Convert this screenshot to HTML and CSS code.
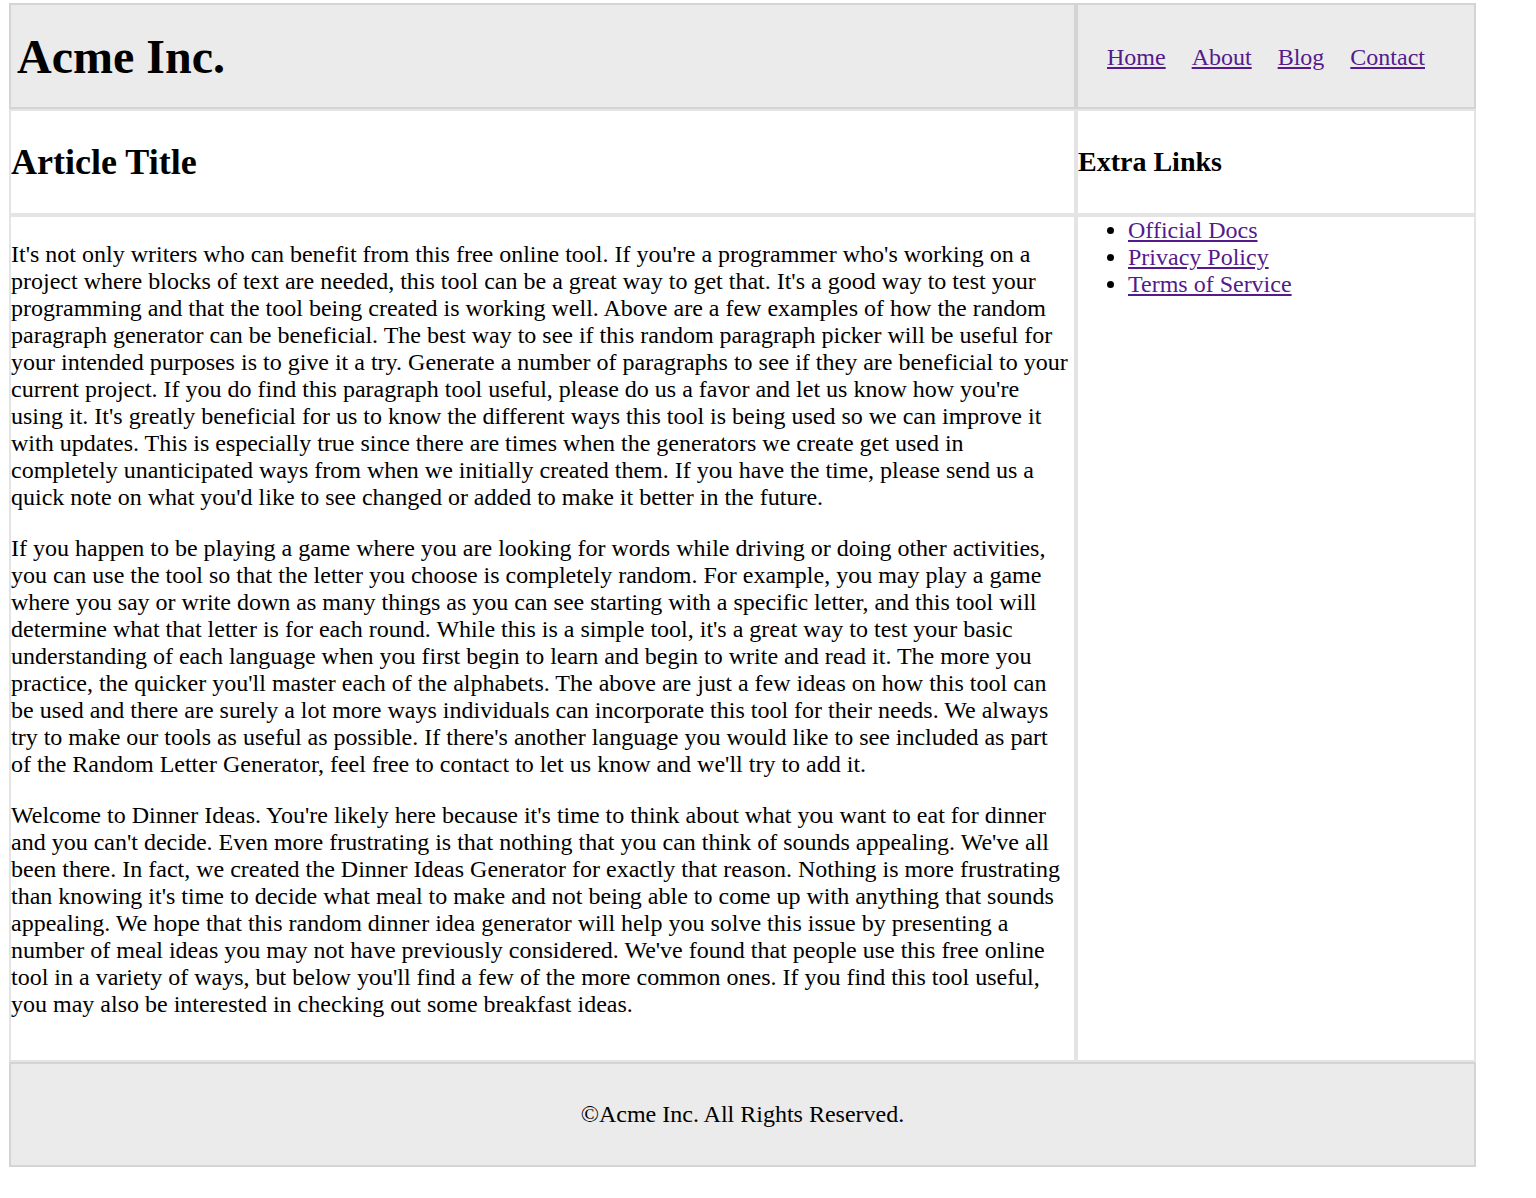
FILE: index.html
```html
<!DOCTYPE html>
<html lang="en">
<head>
<meta charset="utf-8">
<title>Acme Inc.</title>
<link rel="stylesheet" href="styles.css">
</head>
<body>
<div class="page">
  <header class="cell cell-dark brand">
    <h1 class="brand-title">Acme Inc.</h1>
  </header>
  <nav class="cell cell-dark nav">
    <ul class="nav-list">
      <li><a href="#">Home</a></li>
      <li><a href="#">About</a></li>
      <li><a href="#">Blog</a></li>
      <li><a href="#">Contact</a></li>
    </ul>
  </nav>
  <div class="cell cell-light title-cell">
    <h2 class="article-title">Article Title</h2>
  </div>
  <div class="cell cell-light title-cell">
    <h3 class="side-title">Extra Links</h3>
  </div>
  <main class="cell cell-light content">
    <p>It's not only writers who can benefit from this free online tool. If you're a programmer who's working on a project where blocks of text are needed, this tool can be a great way to get that. It's a good way to test your programming and that the tool being created is working well. Above are a few examples of how the random paragraph generator can be beneficial. The best way to see if this random paragraph picker will be useful for your intended purposes is to give it a try. Generate a number of paragraphs to see if they are beneficial to your current project. If you do find this paragraph tool useful, please do us a favor and let us know how you're using it. It's greatly beneficial for us to know the different ways this tool is being used so we can improve it with updates. This is especially true since there are times when the generators we create get used in completely unanticipated ways from when we initially created them. If you have the time, please send us a quick note on what you'd like to see changed or added to make it better in the future.</p>
    <p>If you happen to be playing a game where you are looking for words while driving or doing other activities, you can use the tool so that the letter you choose is completely random. For example, you may play a game where you say or write down as many things as you can see starting with a specific letter, and this tool will determine what that letter is for each round. While this is a simple tool, it's a great way to test your basic understanding of each language when you first begin to learn and begin to write and read it. The more you practice, the quicker you'll master each of the alphabets. The above are just a few ideas on how this tool can be used and there are surely a lot more ways individuals can incorporate this tool for their needs. We always try to make our tools as useful as possible. If there's another language you would like to see included as part of the Random Letter Generator, feel free to contact to let us know and we'll try to add it.</p>
    <p>Welcome to Dinner Ideas. You're likely here because it's time to think about what you want to eat for dinner and you can't decide. Even more frustrating is that nothing that you can think of sounds appealing. We've all been there. In fact, we created the Dinner Ideas Generator for exactly that reason. Nothing is more frustrating than knowing it's time to decide what meal to make and not being able to come up with anything that sounds appealing. We hope that this random dinner idea generator will help you solve this issue by presenting a number of meal ideas you may not have previously considered. We've found that people use this free online tool in a variety of ways, but below you'll find a few of the more common ones. If you find this tool useful, you may also be interested in checking out some breakfast ideas.</p>
  </main>
  <aside class="cell cell-light sidebar">
    <ul class="side-list">
      <li><a href="#">Official Docs</a></li>
      <li><a href="#">Privacy Policy</a></li>
      <li><a href="#">Terms of Service</a></li>
    </ul>
  </aside>
  <footer class="cell cell-dark footer">
    <p class="footer-text">©Acme Inc. All Rights Reserved.</p>
  </footer>
</div>
</body>
</html>
```

FILE: styles.css
```css
html, body {
  margin: 0;
  padding: 0;
  background: #ffffff;
}

body {
  font-family: "Liberation Serif", "Times New Roman", serif;
  font-size: 24px;
  line-height: 27px;
  color: #000000;
}

.page {
  display: grid;
  grid-template-columns: 1067px 400px;
  grid-template-rows: 106px 106px auto 105px;
  width: 1467px;
  margin: 3px 0 0 9px;
}

.cell {
  box-sizing: border-box;
  border: 2px solid #e4e4e4;
}

.cell-dark {
  background: #ebebeb;
  border-color: #d4d4d4;
}

.cell-light {
  background: #ffffff;
  border-color: #e4e4e4;
}

a {
  color: #551a8b;
  text-decoration: underline;
}

.brand {
  display: flex;
  align-items: center;
  padding-left: 6px;
}

.brand-title {
  margin: 0;
  font-size: 48px;
  line-height: 55px;
  font-weight: bold;
}

.nav {
  display: flex;
  align-items: center;
  padding-left: 29px;
  padding-top: 3px;
}

.nav-list {
  display: flex;
  gap: 26px;
  list-style: none;
  margin: 0;
  padding: 0;
}

.title-cell {
  display: flex;
  align-items: center;
}

.article-title {
  margin: 0;
  font-size: 36px;
  line-height: 42px;
  font-weight: bold;
}

.side-title {
  margin: 0;
  font-size: 28px;
  line-height: 32px;
  font-weight: bold;
}

.content {
  padding-right: 5px;
  padding-bottom: 18px;
}

.content p {
  margin: 24px 0;
}

.side-list {
  margin: 0;
  padding-left: 50px;
}

.footer {
  grid-column: 1 / span 2;
  display: flex;
  align-items: center;
  justify-content: center;
}

.footer-text {
  margin: 0;
}
```
